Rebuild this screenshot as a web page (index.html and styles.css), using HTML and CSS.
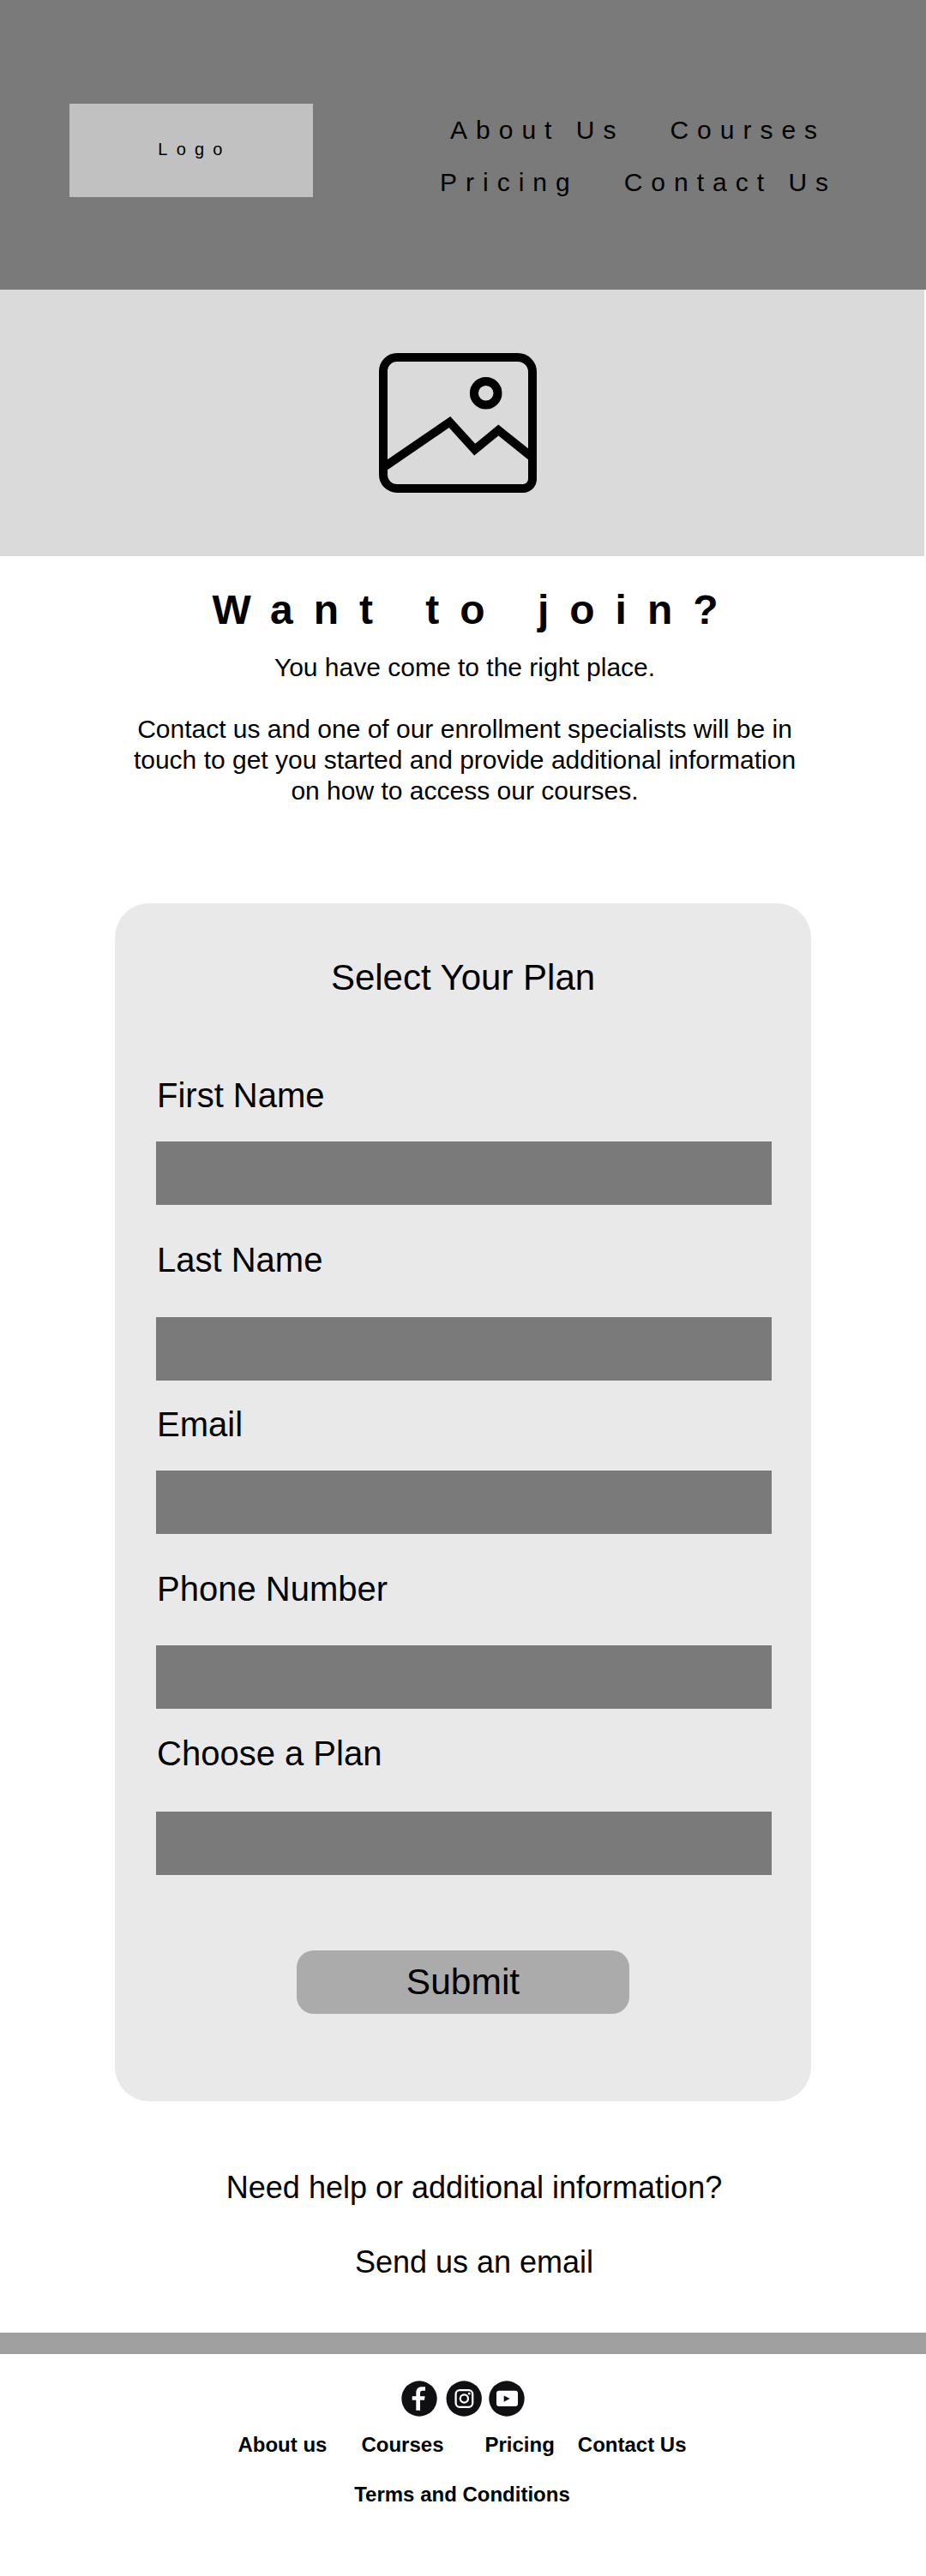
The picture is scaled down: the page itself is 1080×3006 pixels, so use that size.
FILE: index.html
```html
<!DOCTYPE html>
<html lang="en">
<head>
<meta charset="utf-8">
<title>Want to join?</title>
<link rel="stylesheet" href="styles.css">
</head>
<body>
<header class="header">
  <a class="logo">Logo</a>
  <nav class="nav">
    <div class="nav-row nav-row-first"><a>About Us</a><a>Courses</a></div>
    <div class="nav-row"><a>Pricing</a><a>Contact Us</a></div>
  </nav>
</header>
<div class="hero">
  <svg class="hero-icon" viewBox="0 0 184 163" fill="none" stroke="#000" stroke-width="10">
    <path d="M21 5H162A17 17 0 0 1 179 22V147A11 11 0 0 1 168 158H21A16 16 0 0 1 5 142V21A16 16 0 0 1 21 5Z"/>
    <circle cx="124.7" cy="46.7" r="13.8"/>
    <path d="M5 133.7L82.5 80.5L111.7 112.7L139.3 90L178 121"/>
  </svg>
</div>
<main class="main">
  <section class="intro">
    <h1>Want to join?</h1>
    <p>You have come to the right place.</p>
    <p>Contact us and one of our enrollment specialists will be in touch to get you started and provide additional information on how to access our courses.</p>
  </section>
  <form class="card">
    <h2>Select Your Plan</h2>
    <div class="field"><label for="first">First Name</label><input id="first"></div>
    <div class="field field-low"><label for="last">Last Name</label><input id="last"></div>
    <div class="field"><label for="email">Email</label><input id="email"></div>
    <div class="field field-mid"><label for="phone">Phone Number</label><input id="phone"></div>
    <div class="field field-lowest"><label for="plan">Choose a Plan</label><input id="plan"></div>
    <button class="submit" type="button">Submit</button>
  </form>
  <section class="help">
    <p>Need help or additional information?</p>
    <p>Send us an email</p>
  </section>
</main>
<footer class="footer">
  <div class="social">
    <svg viewBox="0 0 42 42"><circle cx="21" cy="21" r="20.7" fill="#101013"/><path fill="#fff" d="M17.3 34.7V22.7H12.7V18.2H17.3V14.2C17.3 9.5 19.8 7.2 24 7.2H28V11.8H25C22.8 11.8 22 12.8 22 14.8V18.2H27.6L27 22.7H22V34.7Z"/></svg>
    <svg viewBox="0 0 42 42"><circle cx="21.2" cy="21" r="20.7" fill="#101013"/><g fill="none" stroke="#fff" stroke-width="2.3"><rect x="11.6" y="11.2" width="19.6" height="19.6" rx="4.5"/><circle cx="21.4" cy="21" r="4.6"/></g><circle cx="27.2" cy="15.2" r="1.4" fill="#fff"/></svg>
    <svg viewBox="0 0 42 42"><circle cx="21" cy="21" r="20.7" fill="#101013"/><rect x="9" y="11.8" width="25" height="18.2" rx="3" fill="#fff"/><path fill="#101013" d="M17.7 17.4L24.7 21L17.7 24.8Z"/></svg>
  </div>
  <div class="footer-links"><a>About us</a><a>Courses</a><a>Pricing</a><a>Contact Us</a></div>
  <div class="footer-links"><a>Terms and Conditions</a></div>
</footer>
</body>
</html>
```
FILE: styles.css
```css
* { box-sizing: border-box; margin: 0; padding: 0; }

body {
  width: 1080px;
  min-height: 3006px;
  background: #fff;
  color: #000;
  font-family: "Liberation Sans", Arial, sans-serif;
}

.header {
  display: flex;
  align-items: flex-start;
  height: 338px;
  padding: 121px 0 0 81px;
  background: #7a7a7a;
}

.logo {
  width: 284px;
  height: 109px;
  padding-left: 8px;
  background: #c1c1c1;
  font-size: 20px;
  line-height: 106px;
  letter-spacing: 10.2px;
  text-align: center;
}

.nav {
  margin-left: 148px;
  font-size: 30px;
  line-height: 61px;
  letter-spacing: 10px;
  white-space: nowrap;
}

.nav-row { display: flex; gap: 53px; }
.nav-row-first { padding-left: 12px; }

.hero {
  display: flex;
  width: 1078px;
  height: 311px;
  padding: 74px 0 0 442px;
  background: #dadada;
}

.hero-icon { width: 184px; height: 163px; }

.intro {
  width: 800px;
  margin: 33px 0 0 142px;
  font-size: 30px;
  line-height: 36px;
  text-align: center;
}

.intro h1 {
  padding-left: 25px;
  margin-bottom: 19px;
  font-size: 48px;
  line-height: 60px;
  letter-spacing: 24px;
  white-space: nowrap;
}

.intro p + p { margin-top: 36px; }

.card {
  width: 812px;
  height: 1398px;
  margin: 113px 0 0 134px;
  padding: 57px 46px 0 48px;
  border-radius: 40px;
  background: #e9e9e9;
}

.card h2 {
  padding-right: 2px;
  margin-bottom: 77px;
  font-size: 42px;
  font-weight: 400;
  line-height: 60px;
  text-align: center;
}

.field { height: 192px; font-size: 40px; line-height: 60px; }
.field label { display: block; padding-left: 1px; }

.field input {
  display: block;
  width: 718px;
  height: 74px;
  margin-top: 24px;
  border: 0;
  background: #7a7a7a;
}

.field-mid input { margin-top: 36px; }
.field-low input { margin-top: 37px; }
.field-lowest input { margin-top: 38px; }

.submit {
  display: block;
  width: 388px;
  height: 74px;
  margin: 68px 0 0 164px;
  border: 0;
  border-radius: 20px;
  background: #ababab;
  color: #000;
  font: 42.5px/74px "Liberation Sans", Arial, sans-serif;
}

.help {
  width: 1080px;
  margin: 57px 0 39px;
  padding-left: 26px;
  font-size: 36px;
  line-height: 87px;
  text-align: center;
}

.footer {
  padding-top: 31px;
  border-top: 25px solid #a0a0a0;
  font-size: 24px;
  font-weight: 700;
  line-height: 58px;
}

.social { display: flex; padding-left: 468px; margin-bottom: 4px; }
.social svg { width: 42px; height: 42px; margin-right: 10px; }
.social svg + svg { margin-right: 8px; }

.footer-links { display: flex; justify-content: center; padding-right: 2px; }
.footer-links a:nth-child(2) { margin: 0 48px 0 40px; }
.footer-links a:nth-child(4) { margin-left: 27px; }
```
